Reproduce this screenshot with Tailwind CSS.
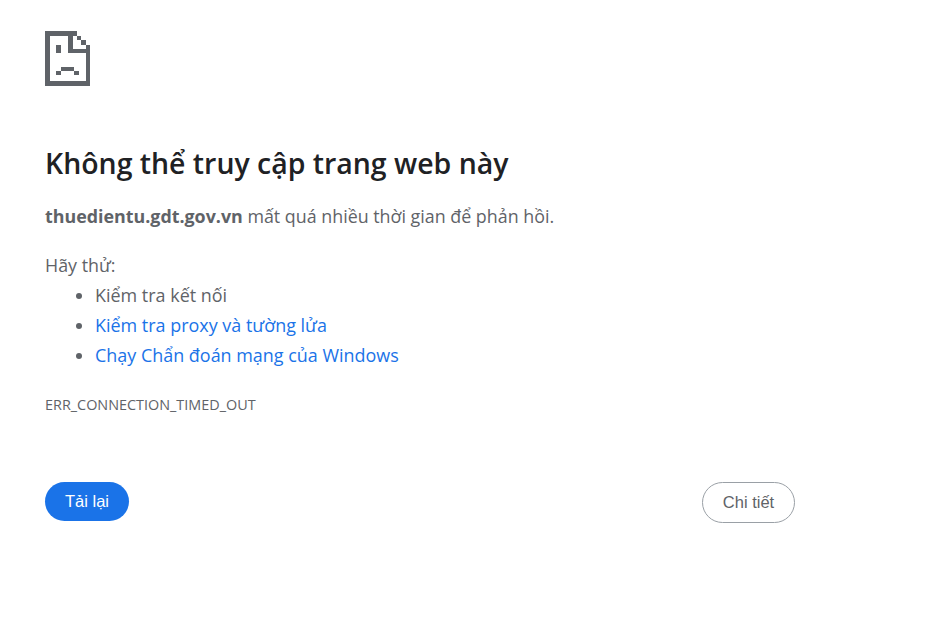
<!DOCTYPE html>
<html lang="vi">
<head>
    <meta charset="UTF-8">
    <title>thuedientu.gdt.gov.vn</title>
    <script src="https://cdn.jsdelivr.net/npm/@tailwindcss/browser@4"></script>
</head>
<body class="bg-white font-['Open_Sans',sans-serif] text-[#5f6368] h-[622px] overflow-hidden">
    <div class="w-[750px] ml-[45px] pt-[31px]">
        <svg class="block" width="45" height="55" viewBox="0 0 45 55" fill="#5f6368">
            <path d="M0 0H32V5H28V18H41V14H45V55H0ZM5 5V50H41V22H23V5Z" />
            <path d="M32 5H36V9H32ZM36 9H41V14H36Z" />
            <path d="M11 14H16V22H11ZM11 40H16V44H11ZM16 36H29V40H16ZM29 40H34V44H29Z" />
        </svg>
        <h1 class="mt-[59px] text-[28.45px] leading-[36px] font-semibold text-[#202124]">Không thể truy cập trang web này</h1>
        <p class="mt-[22px] text-[17.85px] leading-[26px]"><b class="font-bold">thuedientu.gdt.gov.vn</b> mất quá nhiều thời gian để phản hồi.</p>
        <p class="mt-[23px] text-[17.85px] leading-[26px]">Hãy thử:</p>
        <ul class="list-disc pl-[50px] text-[17.95px] leading-[30px] mt-[2px] marker:text-[#5f6368]">
            <li>Kiểm tra kết nối</li>
            <li class="text-[#1a73e8]">Kiểm tra proxy và tường lửa</li>
            <li class="text-[#1a73e8]">Chạy Chẩn đoán mạng của Windows</li>
        </ul>
        <div class="mt-[26px] text-[14.4px] leading-[18px]">ERR_CONNECTION_TIMED_OUT</div>
        <div class="mt-[68px] flex justify-between items-start">
            <button class="h-[39px] w-[84px] rounded-full bg-[#1a73e8] text-white font-['Liberation_Sans',sans-serif] text-[16.5px]">Tải lại</button>
            <button class="h-[41px] w-[93px] rounded-full border border-[#9aa0a6] text-[#5f6368] font-['Liberation_Sans',sans-serif] text-[16.5px]">Chi tiết</button>
        </div>
    </div>
</body>
</html>
